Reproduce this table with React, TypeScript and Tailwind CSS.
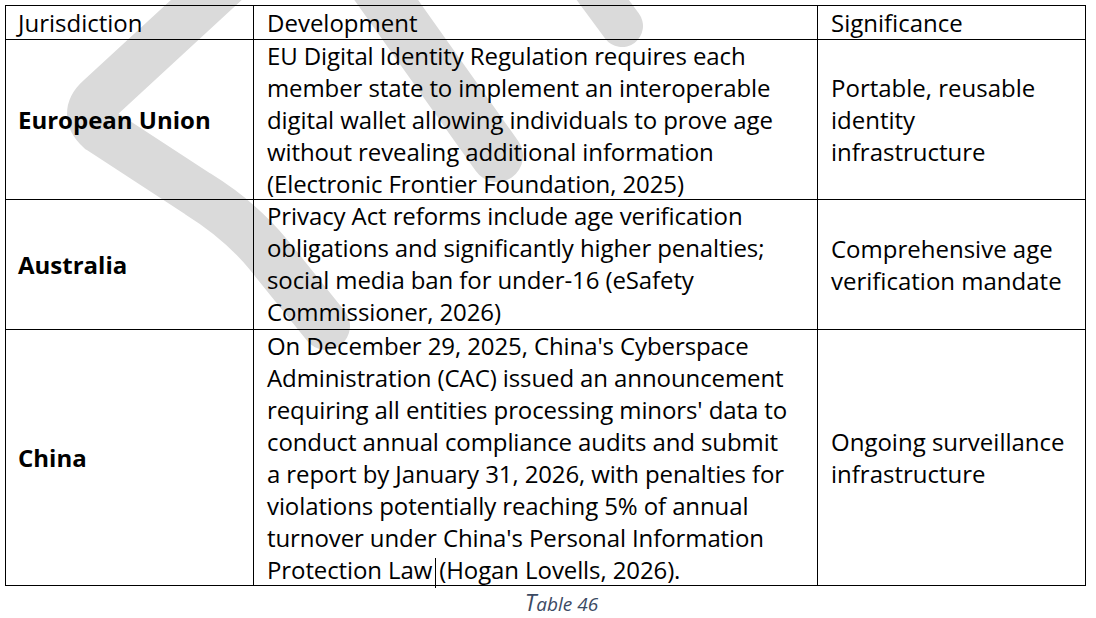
import React from 'react';

const rows = [
  {
    place: 'European Union',
    dev: [
      'EU Digital Identity Regulation requires each',
      'member state to implement an interoperable',
      'digital wallet allowing individuals to prove age',
      'without revealing additional information',
      '(Electronic Frontier Foundation, 2025)',
    ],
    sig: ['Portable, reusable', 'identity', 'infrastructure'],
    h: 'h-[160px]',
  },
  {
    place: 'Australia',
    dev: [
      'Privacy Act reforms include age verification',
      'obligations and significantly higher penalties;',
      'social media ban for under-16 (eSafety',
      'Commissioner, 2026)',
    ],
    sig: ['Comprehensive age', 'verification mandate'],
    h: 'h-[130px]',
  },
  {
    place: 'China',
    dev: [
      "On December 29, 2025, China's Cyberspace",
      'Administration (CAC) issued an announcement',
      "requiring all entities processing minors' data to",
      'conduct annual compliance audits and submit',
      'a report by January 31, 2026, with penalties for',
      'violations potentially reaching 5% of annual',
      "turnover under China's Personal Information",
    ],
    sig: ['Ongoing surveillance', 'infrastructure'],
    h: 'h-[256px]',
  },
];

const Watermark = () => (
  <svg className="absolute inset-0 pointer-events-none" width="1096" height="618" viewBox="0 0 1096 618">
    <g fill="none" stroke="#dadada" strokeLinecap="round" strokeLinejoin="round">
      <path d="M228 -20 L100 98 Q82 114 100 130 L198 194 Q240 220 268 254 L326 326" strokeWidth="48" />
      <path d="M372 -20 L497 156" strokeWidth="52" />
      <path d="M588 -20 L622 26" strokeWidth="42" />
    </g>
  </svg>
);

export default function App() {
  return (
    <div className="relative w-[1096px] h-[618px] bg-white overflow-hidden text-black font-['Open_Sans',sans-serif]">
      <Watermark />
      <div className="relative pt-[5px] pl-[5px]">
        <div className="grid grid-cols-[248px_564px_268px] border-l border-t border-black w-[1081px] text-[24px] leading-[32px]">
          {/* header */}
          <div className="h-[34px] border-r border-b border-black pl-[12px] flex items-center">Jurisdiction</div>
          <div className="h-[34px] border-r border-b border-black pl-[13px] flex items-center">Development</div>
          <div className="h-[34px] border-r border-b border-black pl-[13px] flex items-center">Significance</div>

          {rows.map((r, i) => (
            <React.Fragment key={r.place}>
              <div className={`${r.h} border-r border-b border-black pl-[12px] flex items-center font-bold`}>
                {r.place}
              </div>
              <div className={`${r.h} border-r border-b border-black pl-[13px] flex flex-col justify-start whitespace-nowrap tracking-[-0.1px]`}>
                {r.dev.map(line => (
                  <div key={line}>{line}</div>
                ))}
                {i === 2 && (
                  <div className="flex items-center">
                    <span>Protection Law</span>
                    <span className="inline-block w-px h-[30px] bg-black mx-[3px] translate-y-[3px]" />
                    <span>(Hogan Lovells, 2026).</span>
                  </div>
                )}
              </div>
              <div className={`${r.h} border-r border-b border-black pl-[13px] flex flex-col justify-center whitespace-nowrap`}>
                {r.sig.map(line => (
                  <div key={line}>{line}</div>
                ))}
              </div>
            </React.Fragment>
          ))}
        </div>
        <div className="w-[1081px] flex justify-center mt-[4px] pl-[32px]">
          <span className="italic text-[#3b4a63] text-[19px] leading-[24px]">
            <span className="text-[23px]">T</span>able 46
          </span>
        </div>
      </div>
    </div>
  );
}
